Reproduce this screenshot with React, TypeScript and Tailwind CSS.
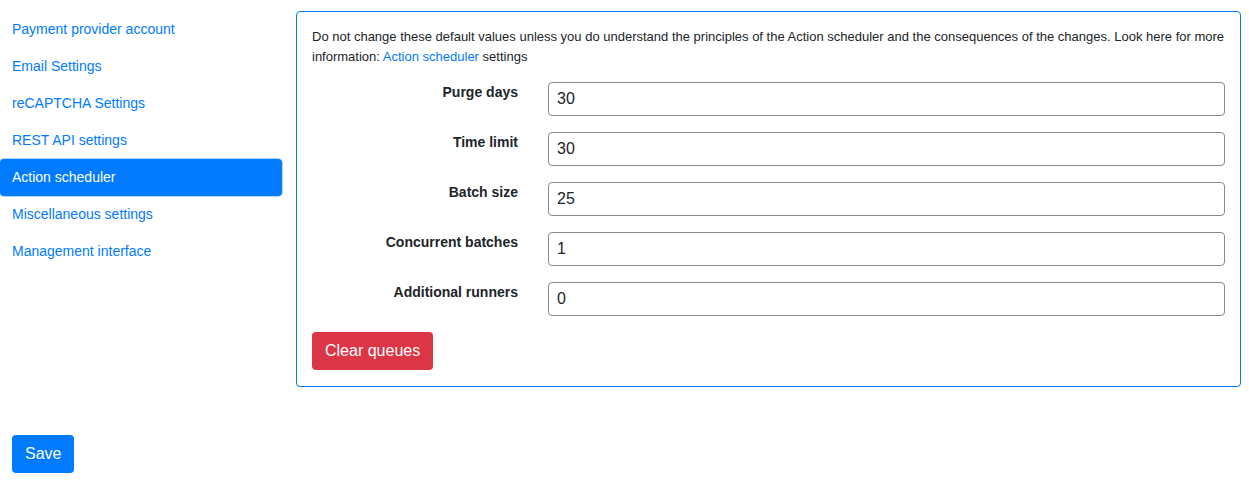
const font = { fontFamily: '"Liberation Sans", Arial, sans-serif' };

const menu = [
  "Payment provider account",
  "Email Settings",
  "reCAPTCHA Settings",
  "REST API settings",
  "Action scheduler",
  "Miscellaneous settings",
  "Management interface",
];

const fields: [string, string][] = [
  ["Purge days", "30"],
  ["Time limit", "30"],
  ["Batch size", "25"],
  ["Concurrent batches", "1"],
  ["Additional runners", "0"],
];

export default function App() {
  return (
    <div className="min-h-[490px] w-[1249px] bg-white text-[#212529]" style={font}>
      <div className="flex pt-[10px]">
        <nav className="flex w-[282px] shrink-0 flex-col pt-px">
          {menu.map((m) => {
            const active = m === "Action scheduler";
            return (
              <a
                key={m}
                href="#"
                className={
                  "block px-3 py-2 text-[14px] leading-[21px] " +
                  (active
                    ? "rounded-[4px] bg-[#007bff] text-white shadow-[0_0_0_1px_rgba(0,123,255,0.3)]"
                    : "text-[#007bff]")
                }
              >
                {m}
              </a>
            );
          })}
        </nav>

        <section className="ml-[14px] mt-px w-[945px] rounded-[4px] border border-[#007bff] px-[15px] pt-[15px] pb-[16px]">
          <p className="mb-4 text-[13px] leading-[19.5px]">
            Do not change these default values unless you do understand the principles of the Action
            scheduler and the consequences of the changes. Look here for more information:{" "}
            <a href="#" className="text-[#007bff]">
              Action scheduler
            </a>{" "}
            settings
          </p>

          {fields.map(([label, value]) => (
            <div key={label} className="mb-4 flex items-start gap-[30px]">
              <label className="w-[206px] shrink-0 text-right text-[14px] font-bold leading-[21px]">
                {label}
              </label>
              <input
                defaultValue={value}
                className="h-[34px] flex-1 rounded-[4px] border border-[#8a8a8a] px-2 text-[16px] text-[#212529] outline-none"
                style={font}
              />
            </div>
          ))}

          <button
            type="button"
            className="h-[38px] rounded-[4px] bg-[#dc3545] px-[13px] text-[16px] text-white"
            style={font}
          >
            Clear queues
          </button>
        </section>
      </div>

      <div className="px-3 pt-[48px]">
        <button
          type="button"
          className="h-[38px] rounded-[4px] bg-[#007bff] px-[13px] text-[16px] text-white"
          style={font}
        >
          Save
        </button>
      </div>
    </div>
  );
}
